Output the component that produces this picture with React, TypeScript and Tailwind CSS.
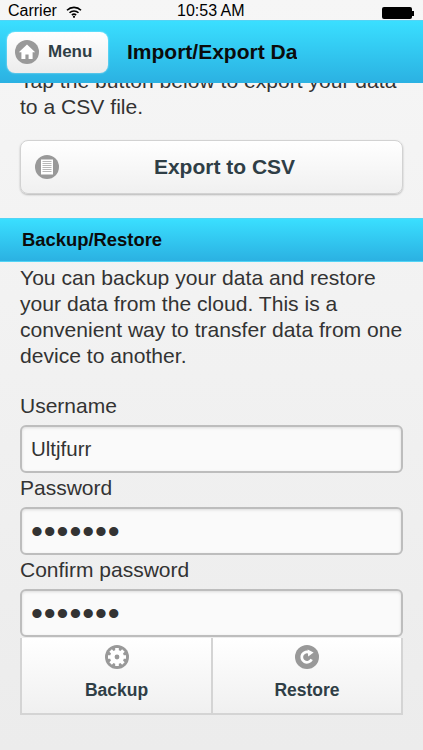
import type { ReactNode } from "react";

const font = "font-['Liberation_Sans',Arial,sans-serif]";

function IconDisc({ children }: { children: ReactNode }) {
  return (
    <svg viewBox="0 0 24 24" className="w-6 h-6 shrink-0">
      <circle cx="12" cy="12" r="12" fill="#999999" />
      {children}
    </svg>
  );
}

function HomeIcon() {
  return (
    <IconDisc>
      <path d="M12 4.5 3.8 12.2h2.6V19h4v-4.6h3.2V19h4v-6.8h2.6z" fill="#fff" />
    </IconDisc>
  );
}

function DocIcon() {
  return (
    <IconDisc>
      <rect x="6" y="4.5" width="12" height="15" fill="#fff" />
      <path
        d="M7.5 6.5h9M7.5 8.5h9M7.5 10.5h9M7.5 12.5h9M7.5 14.5h9M7.5 16.5h9"
        stroke="#999999"
        strokeWidth="0.7"
      />
    </IconDisc>
  );
}

function GearIcon() {
  return (
    <IconDisc>
      <circle cx="12" cy="12" r="7" fill="#fff" />
      <path
        d="M12 3v18M3 12h18M5.6 5.6l12.8 12.8M18.4 5.6 5.6 18.4"
        stroke="#fff"
        strokeWidth="3.6"
      />
      <circle cx="12" cy="12" r="2.4" fill="#999999" />
    </IconDisc>
  );
}

function RestoreIcon() {
  return (
    <IconDisc>
      <path
        d="M16.6 14.4A5.2 5.2 0 1 1 14.6 7.6"
        fill="none"
        stroke="#fff"
        strokeWidth="2.8"
      />
      <path d="M12.6 4.6 18.6 7.6 13.2 11.4z" fill="#fff" />
    </IconDisc>
  );
}

function Field({
  label,
  value,
  type = "text",
}: {
  label: string;
  value: string;
  type?: string;
}) {
  return (
    <div className="flex flex-col">
      <label className="text-[21px] leading-[26px] h-[26px] mb-[6px] text-[#333333]">
        {label}
      </label>
      <input
        readOnly
        type={type}
        value={value}
        className={`w-full h-[48px] rounded-md border-2 border-[#bdbdbd] bg-[#fafafa] px-[9px] text-[#333333] outline-none shadow-[inset_0_1px_3px_rgba(0,0,0,0.12)] ${
          type === "password"
            ? "text-[34px] tracking-[0.9px]"
            : "text-[20.5px]"
        }`}
      />
    </div>
  );
}

export default function App() {
  return (
    <div
      className={`${font} w-[423px] h-[750px] overflow-hidden flex flex-col bg-gradient-to-b from-[#f6f6f6] to-[#ececec]`}
    >
      {/* status bar */}
      <div className="relative h-5 shrink-0 flex items-end justify-between pl-2 pr-[9px] text-[16px] leading-[18px] text-black">
        <div className="flex items-end gap-[9px]">
          <span>Carrier</span>
          <svg viewBox="0 0 16 12" className="w-4 h-3 mb-[2px]">
            <path
              d="M1 4.2a10 10 0 0 1 14 0M3.5 6.8a6.4 6.4 0 0 1 9 0M5.9 9.1a3 3 0 0 1 4.2 0"
              fill="none"
              stroke="#000"
              strokeWidth="1.6"
            />
            <circle cx="8" cy="10.8" r="1.1" fill="#000" />
          </svg>
        </div>
        <span className="absolute left-[177px] bottom-0">10:53 AM</span>
        <div className="flex items-center mb-[1px]">
          <div className="w-[30px] h-[12px] rounded-[2px] bg-black" />
          <div className="w-[2px] h-[5px] bg-black" />
        </div>
      </div>

      {/* header */}
      <header className="h-[63px] shrink-0 z-10 flex items-center pl-[7px] bg-gradient-to-b from-[#3adfff] to-[#2bb1e2] border-t border-[#52d4f5]">
        <button className="w-[101px] h-[41px] flex items-center gap-[9px] pl-[8px] rounded-lg bg-gradient-to-b from-white to-[#ececec] shadow-[0_0_2px_rgba(255,255,255,0.7)] text-[17px] font-bold text-[#2f3e46]">
          <HomeIcon />
          Menu
        </button>
        <div className="ml-[19px] w-[170px] overflow-hidden whitespace-nowrap text-[21px] font-bold text-[#0b0b0b]">
          Import/Export Data
        </div>
      </header>

      {/* content, scrolled so the first line sits under the header */}
      <main className="flex-1 overflow-hidden">
        <div className="-mt-[15px] flex flex-col">
          <p className="px-5 text-[21.1px] leading-[26px] text-[#333333]">
            Tap the button below to export your data to a CSV file.
          </p>

          <div className="px-5 mt-[20px]">
            <button className="relative w-full h-[54px] flex items-center justify-center pl-[26px] rounded-lg border border-[#d2d2d2] bg-gradient-to-b from-white to-[#f0f0f0] shadow-[0_1px_2px_rgba(0,0,0,0.25)] text-[21px] font-bold text-[#2f3e46]">
              <span className="absolute left-[14px] top-[14px]">
                <DocIcon />
              </span>
              Export to CSV
            </button>
          </div>

          <div className="mt-[24px] h-[44px] flex items-center px-[22px] bg-gradient-to-b from-[#3adfff] to-[#2bb1e2] border-y border-[#52d4f5] text-[18.4px] font-bold text-[#0b0b0b]">
            Backup/Restore
          </div>

          <p className="px-5 mt-[3px] text-[21.1px] leading-[26px] text-[#333333]">
            You can backup your data and restore your data from the cloud. This
            is a convenient way to transfer data from one device to another.
          </p>

          <div className="px-5 mt-[24px] flex flex-col gap-[2px]">
            <Field label="Username" value="Ultjfurr" />
            <Field label="Password" value="1234567" type="password" />
            <Field label="Confirm password" value="1234567" type="password" />
          </div>

          <div className="mx-5 mt-[1px] h-[77px] grid grid-cols-[191px_1fr] border-2 border-[#d4d4d4] border-t-0 bg-gradient-to-b from-white to-[#f0f0f0]">
            <button className="flex flex-col items-center pt-[7px] gap-[8px] border-r-2 border-[#d4d4d4] text-[17.5px] font-bold text-[#2f3e46]">
              <GearIcon />
              Backup
            </button>
            <button className="flex flex-col items-center pt-[7px] gap-[8px] text-[17.5px] font-bold text-[#2f3e46]">
              <RestoreIcon />
              Restore
            </button>
          </div>
        </div>
      </main>
    </div>
  );
}
